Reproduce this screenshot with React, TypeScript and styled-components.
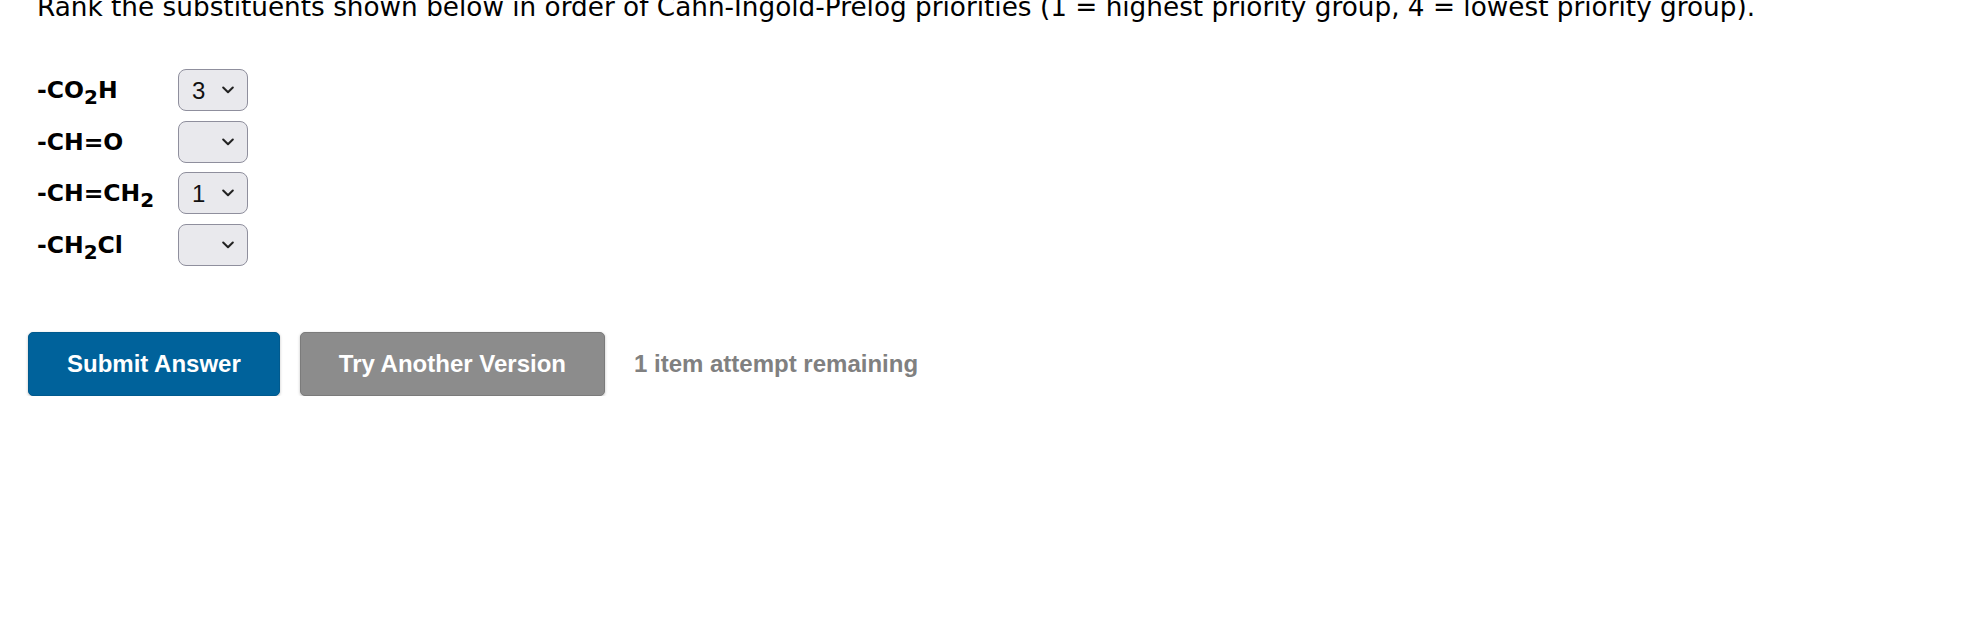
import styled, { createGlobalStyle } from "styled-components";

const GlobalStyle = createGlobalStyle`
  html, body {
    margin: 0;
    padding: 0;
    background: #ffffff;
  }
`;

const Page = styled.div`
  padding: 0 28px;
  font-family: "DejaVu Sans", Verdana, sans-serif;
  color: #000;
`;

const Prompt = styled.p`
  margin: -8px 0 0 9px;
  font-size: 26.3px;
  line-height: 30px;
  white-space: nowrap;
`;

const RankList = styled.div`
  display: flex;
  flex-direction: column;
  gap: 9.5px;
  margin: 47px 0 0 9px;
`;

const RankRow = styled.div`
  display: flex;
  align-items: center;
`;

const Label = styled.span`
  width: 141px;
  font-weight: bold;
  font-size: 23.5px;

  sub {
    font-size: 0.85em;
    line-height: 0;
    vertical-align: -0.3em;
  }
`;

const SelectWrap = styled.div`
  position: relative;
  width: 70px;
  height: 42px;
`;

const Select = styled.select`
  appearance: none;
  width: 100%;
  height: 100%;
  box-sizing: border-box;
  margin: 0;
  padding: 0 0 0 13px;
  border: 1.5px solid #8f8f9d;
  border-radius: 8px;
  background: #e9e9ed;
  color: #111;
  font-family: "Liberation Sans", Arial, sans-serif;
  font-size: 24px;
`;

const Chevron = styled.svg`
  position: absolute;
  right: 14px;
  top: 50%;
  transform: translateY(-50%);
  pointer-events: none;
`;

const Actions = styled.div`
  display: flex;
  align-items: center;
  gap: 20px;
  margin-top: 66px;
  font-family: "Liberation Sans", Arial, Helvetica, sans-serif;
`;

const Button = styled.button<{ $tone: "primary" | "muted" }>`
  height: 64px;
  padding: 0 38px;
  box-sizing: border-box;
  border-radius: 5px;
  border: 1px solid ${(p) => (p.$tone === "primary" ? "#005a8e" : "#7b7b7b")};
  background: ${(p) => (p.$tone === "primary" ? "#00629b" : "#8c8c8c")};
  color: #fff;
  font-family: inherit;
  font-size: 24px;
  font-weight: bold;
  box-shadow: 0 1px 3px rgba(0, 0, 0, 0.25);
  cursor: pointer;
`;

const Remaining = styled.span`
  margin-left: 9px;
  font-size: 24px;
  font-weight: bold;
  color: #808080;
`;

const rows: { label: React.ReactNode; value: string }[] = [
  { label: <>-CO<sub>2</sub>H</>, value: "3" },
  { label: <>-CH=O</>, value: "" },
  { label: <>-CH=CH<sub>2</sub></>, value: "1" },
  { label: <>-CH<sub>2</sub>Cl</>, value: "" },
];

export default function App() {
  return (
    <>
      <GlobalStyle />
      <Page>
        <Prompt>
          Rank the substituents shown below in order of Cahn-Ingold-Prelog priorities (1 = highest
          priority group, 4 = lowest priority group).
        </Prompt>

        <RankList>
          {rows.map((row, i) => (
            <RankRow key={i}>
              <Label>{row.label}</Label>
              <SelectWrap>
                <Select defaultValue={row.value}>
                  <option value=""></option>
                  <option value="1">1</option>
                  <option value="2">2</option>
                  <option value="3">3</option>
                  <option value="4">4</option>
                </Select>
                <Chevron width="12" height="8" viewBox="0 0 12 8">
                  <path d="M1.2 1.5l4.8 4.8 4.8-4.8" fill="none" stroke="#222" strokeWidth="2" strokeLinecap="round" strokeLinejoin="round" />
                </Chevron>
              </SelectWrap>
            </RankRow>
          ))}
        </RankList>

        <Actions>
          <Button $tone="primary">Submit Answer</Button>
          <Button $tone="muted">Try Another Version</Button>
          <Remaining>1 item attempt remaining</Remaining>
        </Actions>
      </Page>
    </>
  );
}
